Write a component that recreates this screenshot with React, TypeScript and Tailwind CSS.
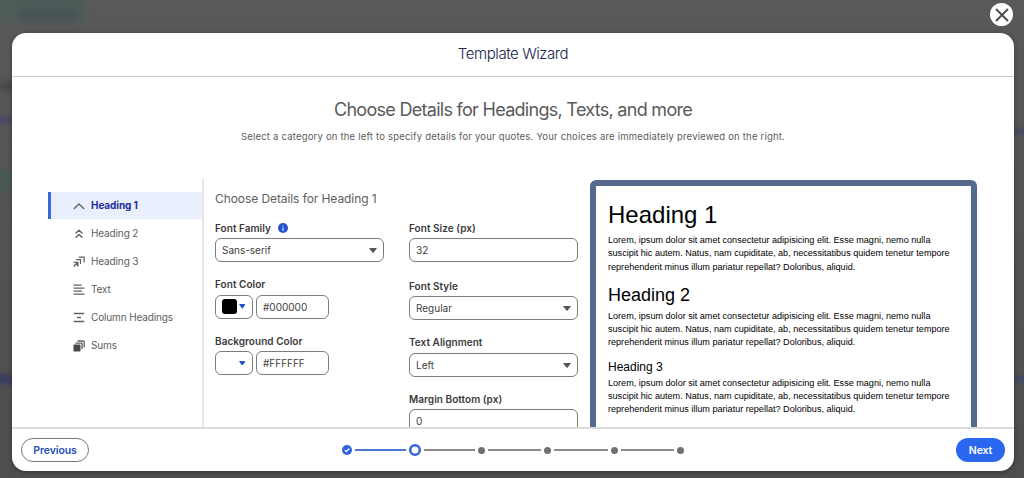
import type { ReactNode } from "react";

const LOREM = [
  "Lorem, ipsum dolor sit amet consectetur adipisicing elit. Esse magni, nemo nulla",
  "suscipit hic autem. Natus, nam cupiditate, ab, necessitatibus quidem tenetur tempore",
  "reprehenderit minus illum pariatur repellat? Doloribus, aliquid.",
];

/** Small line icon on a 12x12 grid. */
function Icon({ children }: { children: ReactNode }) {
  return (
    <svg viewBox="0 0 12 12" className="h-3 w-3 shrink-0 overflow-visible" fill="none" stroke="#606060" strokeWidth="1.2">
      {children}
    </svg>
  );
}

const CATEGORIES: { label: string; icon: ReactNode }[] = [
  {
    label: "Heading 1",
    icon: <path d="M1.3 8.4 6 3.9l4.7 4.5" strokeWidth="1.4" strokeLinecap="round" strokeLinejoin="round" />,
  },
  {
    label: "Heading 2",
    icon: (
      <path d="M3 5.1 6 2.3l3 2.8M3 9.3l3-2.8 3 2.8" strokeWidth="1.4" strokeLinecap="round" strokeLinejoin="round" />
    ),
  },
  {
    label: "Heading 3",
    icon: (
      <>
        <path d="M.6 6.4h4.2v4.2M4.600 6.600.7 10.500" strokeWidth="1.4" />
        <path d="M3.2 3.700h4.300v4.300M5.900 1.200h5.200v5.200" strokeWidth="1.2" />
      </>
    ),
  },
  { label: "Text", icon: <path d="M.5 1.2h8.2M.5 4.2h11M.5 7.2h8.7M.5 10.2h11" strokeWidth="1.3" /> },
  { label: "Column Headings", icon: <path d="M.8 1.5h10.4M4 5.5h4M.8 9.5h10.4" strokeWidth="1.3" /> },
  {
    label: "Sums",
    icon: (
      <>
        <rect x=".5" y="4.5" width="7" height="7" rx=".8" fill="#484848" stroke="none" />
        <path d="M2.4 3.1h5.9q.8 0 .8.8v5.4M4.6 1h5.7q.9 0 .9.900v5.600" strokeWidth="1.3" />
      </>
    ),
  },
];

function Caret({ className }: { className: string }) {
  return (
    <svg viewBox="0 0 8 5" className={className} fill="currentColor" preserveAspectRatio="none">
      <path d="M.6 0h6.8q.7 0 .3.6L4.6 4.600q-.6.600-1.200 0L.3.600Q-.1 0 .6 0Z" />
    </svg>
  );
}

function Field({ label, hint, className = "", children }: { label: string; hint?: ReactNode; className?: string; children: ReactNode }) {
  return (
    <div className={className}>
      <div className="flex h-[17px] items-center gap-[7px] pt-px text-[10px] font-semibold tracking-[0.04px] text-[#3a3a3a]">
        {label}
        {hint}
      </div>
      <div className="mt-[2px] flex gap-[3px]">{children}</div>
    </div>
  );
}

function Box({ value, select = false, className = "w-[169px]" }: { value: string; select?: boolean; className?: string }) {
  return (
    <div
      className={`flex h-6 items-center justify-between rounded-md border border-[#7c7c7c] pt-px pr-[6.5px] pl-[6px] text-[10px] text-[#404040] ${className}`}
    >
      {value}
      {select && <Caret className="h-[5px] w-2 text-[#555]" />}
    </div>
  );
}

function ColorField({ label, swatch, value }: { label: string; swatch: string; value: string }) {
  return (
    <Field label={label}>
      <div className="flex h-6 w-[38px] items-center gap-[1.5px] rounded-md border border-[#7c7c7c] pl-[6px]">
        <span className="h-[15px] w-[15px] rounded-[3px]" style={{ backgroundColor: swatch }} />
        <Caret className="h-[4.5px] w-[6.5px] text-[#2450c8]" />
      </div>
      <Box value={value} className="w-[73px]" />
    </Field>
  );
}

function Info() {
  return (
    <svg viewBox="0 0 10 10" className="h-[10px] w-[10px]">
      <circle cx="5" cy="5" r="5" fill="#2452cc" />
      <path d="M5 2.5v1M4.6 4.6H5v2.6M4.3 7.2h1.4" stroke="#fff" strokeWidth=".9" fill="none" />
    </svg>
  );
}

function Paragraph() {
  return (
    <p className="text-[9.08px] leading-[13.35px] whitespace-nowrap">
      {LOREM.map((line) => (
        <span key={line} className="block">
          {line}
        </span>
      ))}
    </p>
  );
}

function Steps() {
  return (
    <div className="mr-[19px] flex items-center">
      <svg viewBox="0 0 10 10" className="h-[10px] w-[10px]">
        <circle cx="5" cy="5" r="5" fill="#2f62dc" />
        <path d="m2.7 5.1 1.6 1.6 3-3.2" fill="none" stroke="#fff" strokeWidth="1.2" />
      </svg>
      <span className="mr-[3px] ml-[3px] h-[1.5px] w-[51px] bg-[#4d78cf]" />
      <svg viewBox="0 0 12 12" className="h-3 w-3 overflow-visible">
        <circle cx="6" cy="6" r="4.8" fill="#fff" stroke="#3562e0" strokeWidth="2.5" />
      </svg>
      {[0, 1, 2, 3].map((i) => (
        <div key={i} className="flex items-center">
          <span className={`mr-[3px] ml-[3px] h-[1.5px] bg-[#8c8c8c] ${i === 0 ? "w-[51px]" : "w-[53.5px]"}`} />
          <span className="h-[7px] w-[7px] rounded-full bg-[#707070]" />
        </div>
      ))}
    </div>
  );
}

/** Dimmed page that shows around the dialog. */
function Backdrop() {
  return (
    <div className="absolute inset-0 overflow-hidden bg-linear-to-b from-[#595959] to-[#4e4e4e]">
      <div className="absolute -top-2 -left-2 h-8 w-[92px] bg-[#4f5b59] blur-[2px]" />
      <div className="absolute top-[11px] left-[20px] h-[7px] w-[56px] bg-[#44514f] blur-[3px]" />
      <div className="absolute top-[82px] left-0 h-[9px] w-4 bg-[#464646] blur-[3px]" />
      <div className="absolute top-[116px] -left-1 h-2 w-5 bg-[#484a62] blur-[2px]" />
      <div className="absolute top-[170px] -left-2 h-[22px] w-6 bg-[#4a5956] blur-[2px]" />
      <div className="absolute top-[374px] -left-2 h-[10px] w-6 bg-[#3a3f5e] blur-[2px]" />
      <div className="absolute top-[128px] -right-2 h-[6px] w-5 bg-[#464a66] blur-[2px]" />
      <div className="absolute top-[376px] -right-2 h-[6px] w-5 bg-[#434764] blur-[2px]" />
    </div>
  );
}

export default function App() {
  return (
    <div className="relative h-[478px] w-[1024px] overflow-hidden font-['Inter',sans-serif]">
      <Backdrop />
      <div className="relative flex h-full flex-col pr-[10px] pl-3">
        <div className="flex h-[33px] shrink-0 justify-end pt-[3px] pr-px">
          <button className="flex h-[23px] w-[23px] items-center justify-center rounded-full bg-white">
            <svg viewBox="0 0 14 14" className="h-[14px] w-[14px]" stroke="#4c4c4c" strokeWidth="1.9" strokeLinecap="round">
              <path d="m1.5 1.5 11 11M12.5 1.5l-11 11" />
            </svg>
          </button>
        </div>

        <div className="flex h-[438px] flex-col overflow-hidden rounded-[14px] bg-white shadow-[0_1px_5px_rgba(0,0,0,0.35)]">
          <header className="flex h-11 shrink-0 items-center justify-center border-b border-[#cbcbcb]">
            <h1 className="text-[15px] font-light tracking-[-0.43px] text-[#16254a]">Template Wizard</h1>
          </header>

          <main className="min-h-0 flex-1 overflow-hidden">
            <div className="pt-[21px] text-center">
              <h2 className="text-[18px] leading-6 tracking-[-0.71px] text-[#5a5a5a]">Choose Details for Headings, Texts, and more</h2>
              <p className="mt-[7px] text-[9.5px] leading-4 tracking-[0.2px] text-[#5c5c5c]">
                Select a category on the left to specify details for your quotes. Your choices are immediately previewed on the right.
              </p>
            </div>

            <div className="mt-[34px] flex pl-9">
              <nav className="h-[260px] w-[156px] border-r-2 border-[#e6e6e6] pt-[13px]">
                {CATEGORIES.map((c, i) => (
                  <div
                    key={c.label}
                    className={`mb-px flex h-[27px] items-center gap-[6px] border-l-[3px] pl-[22px] text-[10px] ${
                      i === 0
                        ? "border-[#3b66dc] bg-[#e9effd] font-bold tracking-[-0.08px] text-[#1f2d9c]"
                        : "border-transparent tracking-[-0.13px] text-[#5e5e5e]"
                    }`}
                  >
                    <Icon>{c.icon}</Icon>
                    {c.label}
                  </div>
                ))}
              </nav>

              <section className="w-[386px] shrink-0 pt-[12px] pl-[11px]">
                <h3 className="text-[12px] leading-4 tracking-[-0.08px] text-[#606060]">Choose Details for Heading 1</h3>
                <div className="mt-[12px] flex gap-[25px]">
                  <div className="flex w-[169px] flex-col gap-[13.5px]">
                    <Field label="Font Family" hint={<Info />}>
                      <Box value="Sans-serif" select />
                    </Field>
                    <ColorField label="Font Color" swatch="#000000" value="#000000" />
                    <ColorField label="Background Color" swatch="#FFFFFF" value="#FFFFFF" />
                  </div>
                  <div className="flex w-[169px] flex-col gap-[13.5px]">
                    <Field label="Font Size (px)" className="mb-[1.5px]">
                      <Box value="32" />
                    </Field>
                    <Field label="Font Style">
                      <Box value="Regular" select />
                    </Field>
                    <Field label="Text Alignment">
                      <Box value="Left" select />
                    </Field>
                    <Field label="Margin Bottom (px)">
                      <Box value="0" />
                    </Field>
                  </div>
                </div>
              </section>

              <section className="mt-px h-[280px] w-[387px] shrink-0 rounded-md border-[6px] border-[#566a8e] pt-[14px] pl-[12px] font-['Liberation_Sans',Arial,sans-serif] text-black">
                <h1 className="text-[24px] leading-[30px]">Heading 1</h1>
                <div className="mt-[4px]">
                  <Paragraph />
                </div>
                <h2 className="mt-[9px] text-[18px] leading-[24px]">Heading 2</h2>
                <div className="mt-[2.5px]">
                  <Paragraph />
                </div>
                <h3 className="mt-[9px] text-[12px] leading-4">Heading 3</h3>
                <div className="mt-[2px]">
                  <Paragraph />
                </div>
              </section>
            </div>
          </main>

          <footer className="flex h-[44px] shrink-0 items-center justify-between border-t-2 border-[#dcdcdc] px-[9px]">
            <button className="h-6 w-[68px] rounded-full border border-[#777] pt-px text-[10.5px] font-semibold tracking-[-0.1px] text-[#2450b8]">
              Previous
            </button>
            <Steps />
            <button className="h-6 w-[49px] rounded-full bg-[#2b67ee] pt-px text-[10.5px] font-semibold tracking-[-0.1px] text-white">Next</button>
          </footer>
        </div>
      </div>
    </div>
  );
}
